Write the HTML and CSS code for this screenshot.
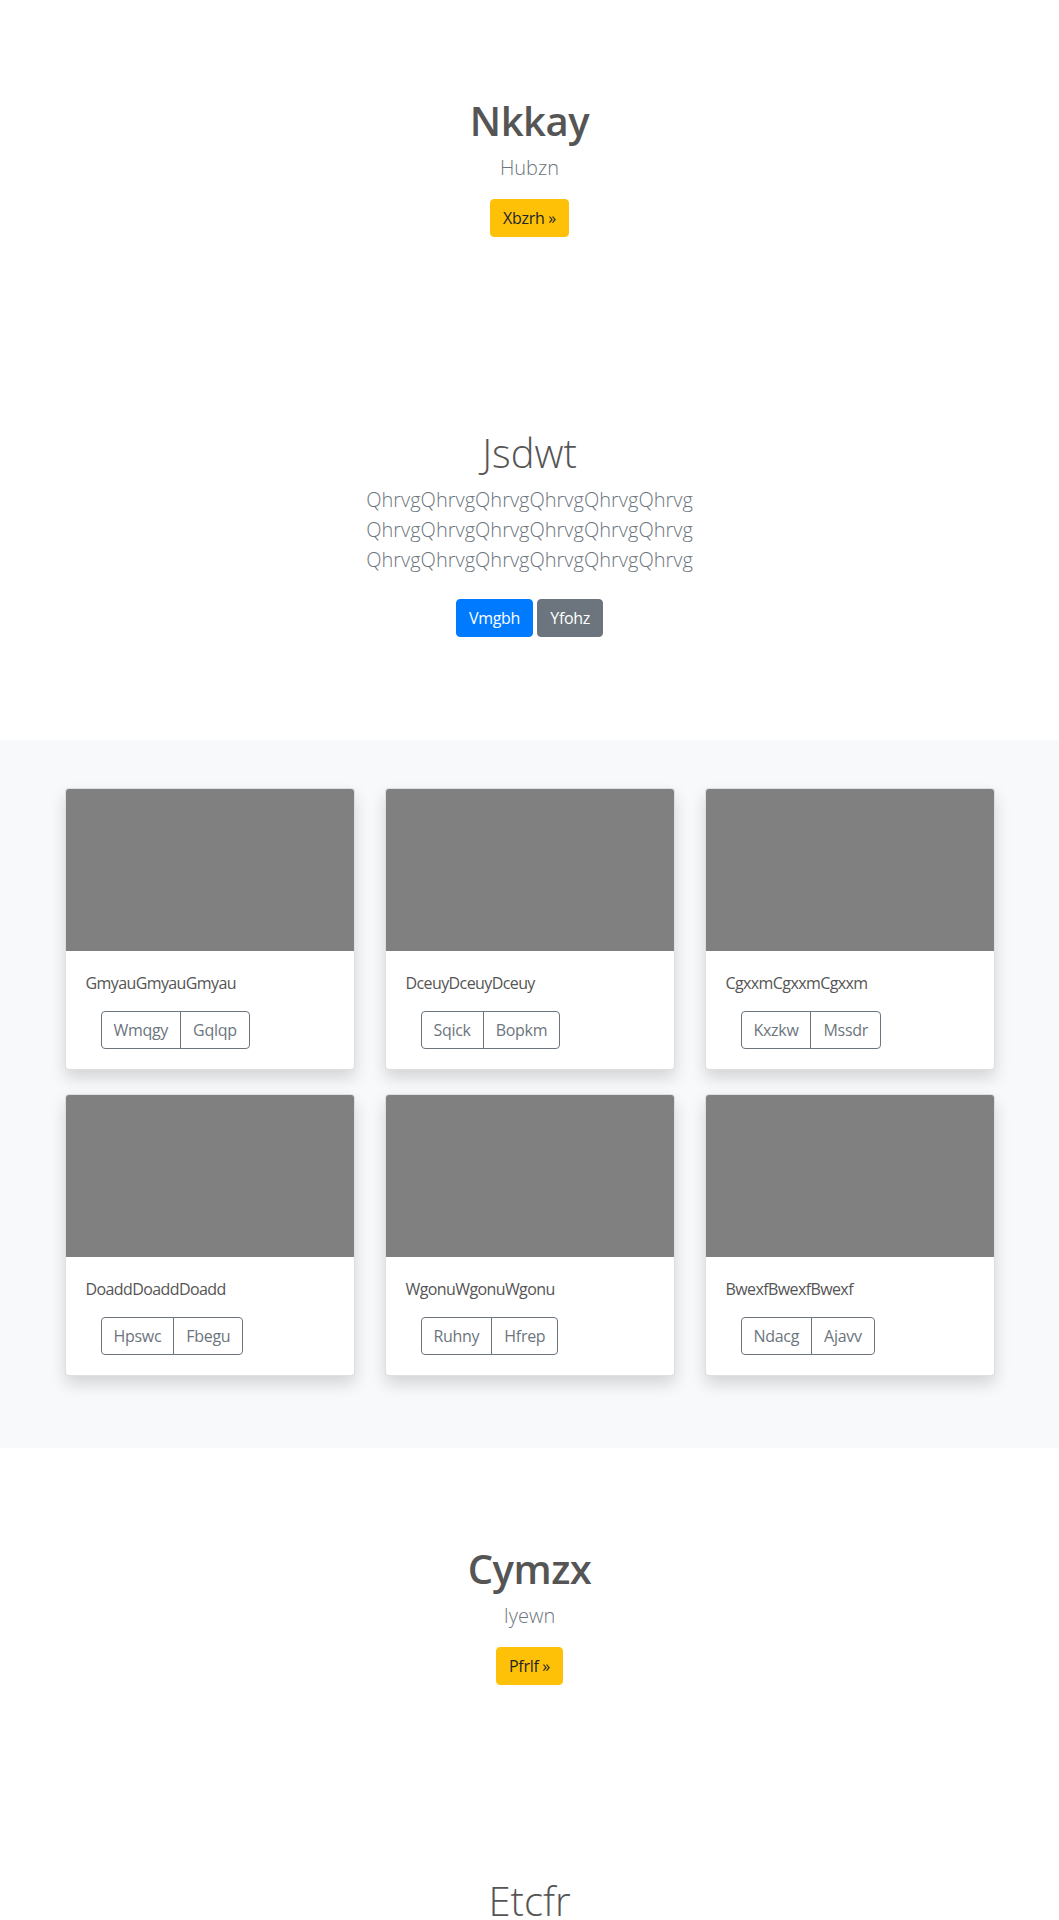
FILE: index.html
```html
<!DOCTYPE html>
<html lang="en">
<head>
<meta charset="utf-8">
<title>Album</title>
<link rel="stylesheet" href="styles.css">
</head>
<body>
<section class="hero">
  <div class="narrow">
    <h1 class="hero-title">Nkkay</h1>
    <p class="lead">Hubzn</p>
    <p class="actions"><a class="btn btn-warning" href="#">Xbzrh »</a></p>
  </div>
</section>

<section class="intro">
  <div class="narrow">
    <h1 class="intro-title">Jsdwt</h1>
    <p class="lead">QhrvgQhrvgQhrvgQhrvgQhrvgQhrvg QhrvgQhrvgQhrvgQhrvgQhrvgQhrvg QhrvgQhrvgQhrvgQhrvgQhrvgQhrvg</p>
    <p class="actions"><a class="btn btn-primary spaced" href="#">Vmgbh</a> <a class="btn btn-secondary spaced" href="#">Yfohz</a></p>
  </div>
</section>

<div class="album">
  <div class="container">
    <div class="card-grid">
      <div class="card">
        <div class="card-img"></div>
        <div class="card-body">
          <p class="card-text">GmyauGmyauGmyau</p>
          <div class="btn-group"><a class="btn btn-outline" href="#">Wmqgy</a><a class="btn btn-outline" href="#">Gqlqp</a></div>
        </div>
      </div>
      <div class="card">
        <div class="card-img"></div>
        <div class="card-body">
          <p class="card-text">DceuyDceuyDceuy</p>
          <div class="btn-group"><a class="btn btn-outline" href="#">Sqick</a><a class="btn btn-outline" href="#">Bopkm</a></div>
        </div>
      </div>
      <div class="card">
        <div class="card-img"></div>
        <div class="card-body">
          <p class="card-text">CgxxmCgxxmCgxxm</p>
          <div class="btn-group"><a class="btn btn-outline" href="#">Kxzkw</a><a class="btn btn-outline" href="#">Mssdr</a></div>
        </div>
      </div>
      <div class="card">
        <div class="card-img"></div>
        <div class="card-body">
          <p class="card-text">DoaddDoaddDoadd</p>
          <div class="btn-group"><a class="btn btn-outline" href="#">Hpswc</a><a class="btn btn-outline" href="#">Fbegu</a></div>
        </div>
      </div>
      <div class="card">
        <div class="card-img"></div>
        <div class="card-body">
          <p class="card-text">WgonuWgonuWgonu</p>
          <div class="btn-group"><a class="btn btn-outline" href="#">Ruhny</a><a class="btn btn-outline" href="#">Hfrep</a></div>
        </div>
      </div>
      <div class="card">
        <div class="card-img"></div>
        <div class="card-body">
          <p class="card-text">BwexfBwexfBwexf</p>
          <div class="btn-group"><a class="btn btn-outline" href="#">Ndacg</a><a class="btn btn-outline" href="#">Ajavv</a></div>
        </div>
      </div>
    </div>
  </div>
</div>

<section class="hero">
  <div class="narrow">
    <h1 class="hero-title">Cymzx</h1>
    <p class="lead">Iyewn</p>
    <p class="actions"><a class="btn btn-warning" href="#">Pfrlf »</a></p>
  </div>
</section>

<section class="intro">
  <div class="narrow">
    <h1 class="intro-title">Etcfr</h1>
  </div>
</section>
</body>
</html>
```

FILE: styles.css
```css
* { box-sizing: border-box; }

html, body {
  margin: 0;
  padding: 0;
}

body {
  font-family: "Open Sans", "Noto Sans", "Liberation Sans", sans-serif;
  font-size: 16px;
  line-height: 1.5;
  color: #555555;
  background: #ffffff;
}

h1 { margin: 0; }
p { margin: 0; }

.narrow {
  max-width: 640px;
  margin: 0 auto;
  padding: 0 15px;
  text-align: center;
}

.hero {
  padding: 97px 0 95px;
  margin-bottom: 32px;
}

.intro {
  padding: 65px 0 63px;
  margin-bottom: 32px;
}

.hero-title,
.intro-title {
  font-size: 40px;
  line-height: 1.2;
  margin-bottom: 8px;
  color: #555555;
}

.hero-title { font-weight: 600; letter-spacing: -0.5px; }
.intro-title { font-weight: 300; }

.lead {
  font-size: 20px;
  line-height: 1.5;
  font-weight: 300;
  color: #6c757d;
  margin-bottom: 16px;
}

.actions { margin-bottom: 0; }

.btn {
  display: inline-block;
  font-size: 16px;
  line-height: 1.5;
  font-weight: 400;
  padding: 6px 12px;
  border: 1px solid transparent;
  border-radius: 4px;
  text-decoration: none;
  vertical-align: middle;
  letter-spacing: -0.3px;
}

.spaced { margin: 8px 0; }

.btn-warning { background: #ffc107; border-color: #ffc107; color: #212529; }
.btn-primary { background: #007bff; border-color: #007bff; color: #ffffff; }
.btn-secondary { background: #6c757d; border-color: #6c757d; color: #ffffff; }

.album {
  background: #f8f9fa;
  padding: 48px 0 72px;
}

.container {
  max-width: 960px;
  margin: 0 auto;
  padding: 0 15px;
}

.card-grid {
  display: grid;
  grid-template-columns: repeat(3, 1fr);
  gap: 24px 30px;
}

.card {
  background: #ffffff;
  border: 1px solid rgba(0, 0, 0, 0.125);
  border-radius: 4px;
  box-shadow: 0 8px 16px rgba(0, 0, 0, 0.15);
  overflow: hidden;
}

.card-img {
  aspect-ratio: 16 / 9;
  background: #808080;
}

.card-body {
  padding: 20px;
}

.card-text {
  margin-bottom: 16px;
  color: #555555;
  letter-spacing: -0.6px;
}

.btn-group {
  display: inline-flex;
  margin-left: 15px;
}

.btn-outline {
  color: #6c757d;
  border-color: #6c757d;
  background: transparent;
}

.btn-group .btn-outline:first-child {
  border-top-right-radius: 0;
  border-bottom-right-radius: 0;
}

.btn-group .btn-outline + .btn-outline {
  margin-left: -1px;
  border-top-left-radius: 0;
  border-bottom-left-radius: 0;
}
```
